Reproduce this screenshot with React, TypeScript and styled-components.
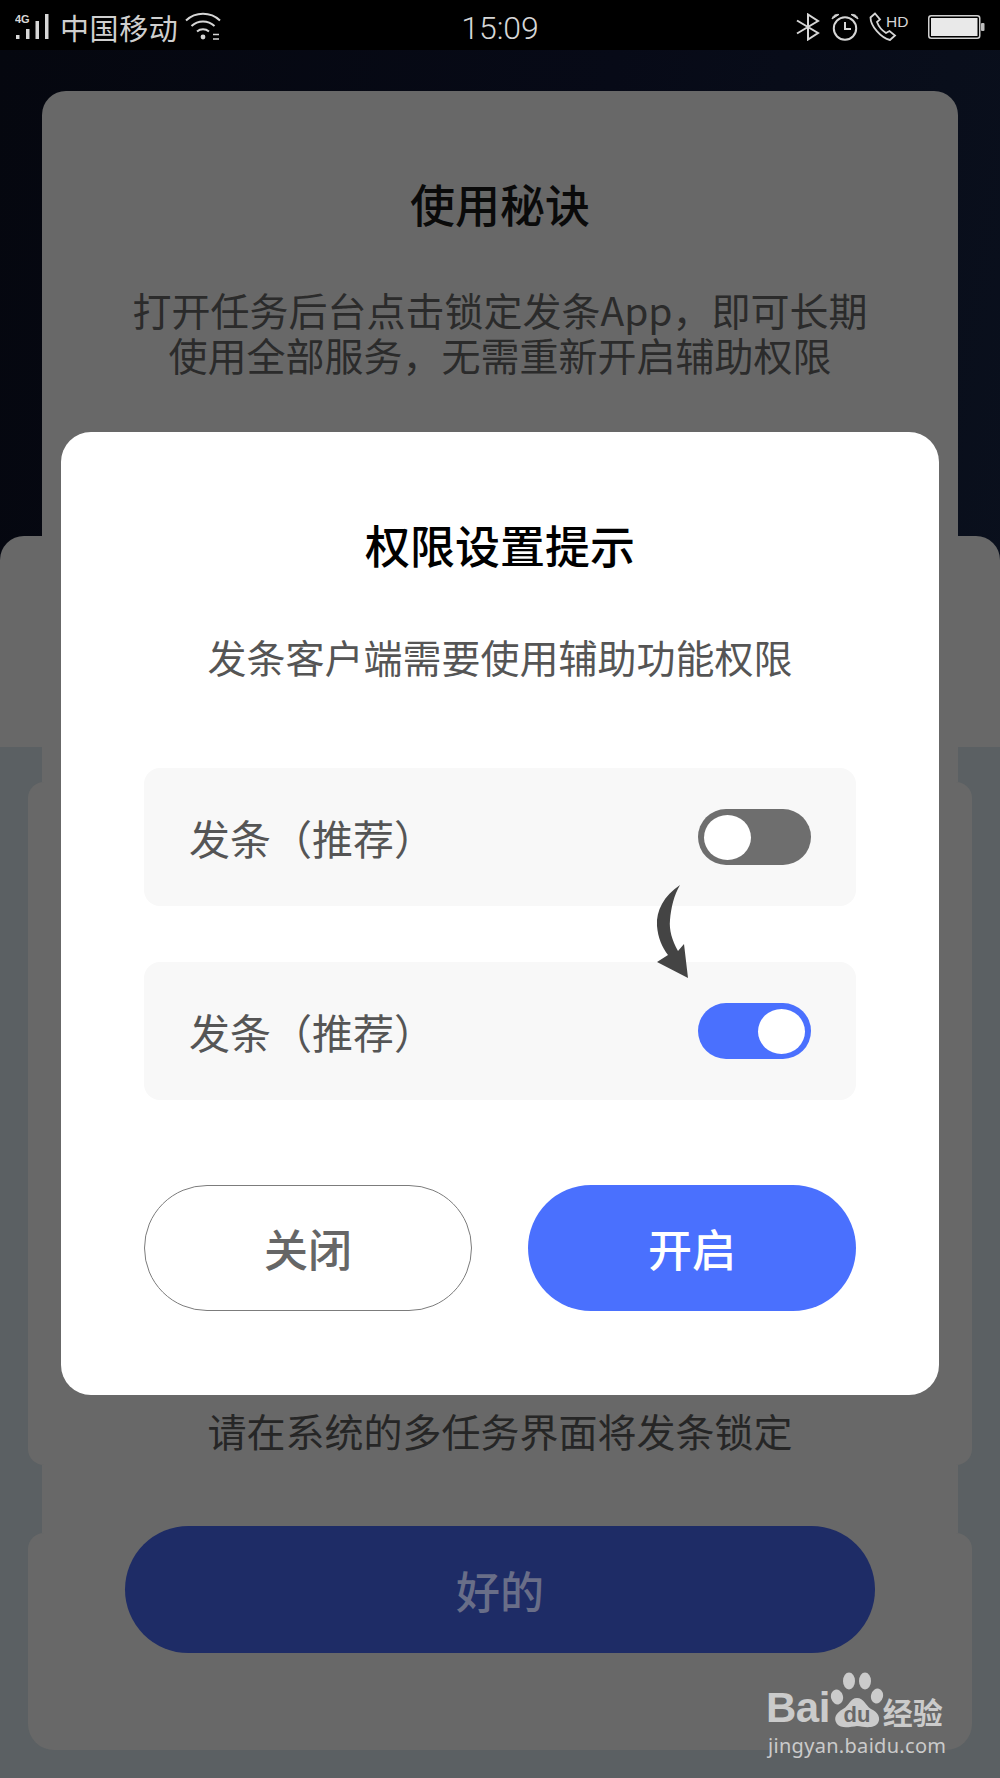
import React from "react";
import styled, { createGlobalStyle } from "styled-components";

const GlobalStyle = createGlobalStyle`
  html, body {
    margin: 0;
    padding: 0;
    background: #5b6063;
  }
  * {
    box-sizing: border-box;
  }
`;

const CJK = `"Noto Sans CJK SC", "Noto Sans", sans-serif`;
const PANEL_GREY = "#686868";

const Page = styled.div`
  position: relative;
  width: 1000px;
  height: 1778px;
  overflow: hidden;
  font-family: ${CJK};
  background: #5b6063;
`;

/* ---------- status bar ---------- */

const StatusBar = styled.div`
  position: relative;
  display: grid;
  grid-template-columns: 1fr auto 1fr;
  align-items: center;
  height: 50px;
  padding: 0 15px;
  background: #000000;
  color: #d2d2d2;
`;

const StatusLeft = styled.div`
  display: flex;
  align-items: center;
  height: 50px;
`;

const StatusRight = styled.div`
  display: flex;
  align-items: center;
  justify-content: flex-end;
  height: 50px;
`;

const Carrier = styled.span`
  margin-left: 9px;
  font-size: 29px;
  line-height: 50px;
  letter-spacing: 0.6px;
  color: #cfcfcf;
`;

const Clock = styled.span`
  padding-top: 3px;
  font-family: "Roboto", "Liberation Sans", sans-serif;
  font-weight: 300;
  font-size: 32px;
  line-height: 50px;
  color: #d6d6d6;
`;

const SignalIcon = () => (
  <svg width="36" height="40" viewBox="0 0 36 40" style={{ display: "block" }}>
    <text x="0" y="16" fontFamily="Liberation Sans" fontSize="11" fontWeight="700" fill="#d8d8d8">
      4G
    </text>
    <rect x="1" y="28" width="3.5" height="4" fill="#d8d8d8" />
    <rect x="11" y="22" width="3.5" height="10" fill="#d8d8d8" />
    <rect x="20.5" y="14" width="3.5" height="18" fill="#d8d8d8" />
    <rect x="30" y="7" width="3.5" height="25" fill="#d8d8d8" />
  </svg>
);

const WifiIcon = () => (
  <svg width="36" height="30" viewBox="0 0 36 30" fill="none" stroke="#d6d6d6" strokeWidth="2" style={{ marginLeft: 7, display: "block" }}>
    <path d="M1 8.5 C10.5 -0.5 25.5 -0.5 35 8.5" />
    <path d="M6.5 14 C13 8 23 8 29.5 14" />
    <path d="M12 19.5 C15.5 16.5 20.5 16.5 24 19.5" />
    <circle cx="18" cy="25" r="2.4" fill="#d6d6d6" stroke="none" />
    <path d="M28 22.5h6M28 27h6" strokeWidth="1.6" />
  </svg>
);

const BluetoothIcon = () => (
  <svg width="24" height="28" viewBox="0 0 24 28" fill="none" stroke="#d6d6d6" strokeWidth="2" style={{ display: "block" }}>
    <path d="M1 7.5 L22 20 L12 26.5 V1.5 L22 8 L1 20.5" />
  </svg>
);

const AlarmIcon = () => (
  <svg width="28" height="28" viewBox="0 0 28 28" fill="none" stroke="#d6d6d6" strokeWidth="2" style={{ marginLeft: 11, display: "block" }}>
    <circle cx="14" cy="15.5" r="11.2" />
    <path d="M14 9v7h6" />
    <path d="M1 6 C2 2 5 1 8 1.5 Z M27 6 C26 2 23 1 20 1.5 Z" fill="#d6d6d6" strokeWidth="1" />
  </svg>
);

const CallHdIcon = () => (
  <svg width="40" height="30" viewBox="0 0 40 30" fill="none" stroke="#d6d6d6" strokeWidth="1.8" style={{ marginLeft: 10, display: "block" }}>
    <path d="M6 1.5 L1.5 5.5 C1.5 14 12 26 21 28 L26 23.5 L20.5 19 L17 21 C13 18.5 9.5 14 8 10 L11 7.5 Z" />
    <text x="17" y="15" fontFamily="Liberation Sans" fontSize="15.5" fill="#d6d6d6" stroke="none">
      HD
    </text>
  </svg>
);

const BatteryIcon = () => (
  <svg width="57" height="26" viewBox="0 0 57 26" style={{ marginLeft: 19, marginTop: 2, display: "block" }}>
    <rect x="0.75" y="0.75" width="51" height="22.5" rx="2.5" fill="none" stroke="#d0d0d0" strokeWidth="1.5" />
    <rect x="3" y="3" width="46.5" height="18" fill="#e9e9e9" />
    <rect x="53" y="8" width="3.5" height="8" rx="1" fill="#bdbdbd" />
  </svg>
);

/* ---------- dimmed page behind the dialog ---------- */

const UpperArea = styled.div`
  display: flex;
  flex-direction: column;
  align-items: center;
  height: 697px;
  padding-top: 41px;
  background: linear-gradient(100deg, #05070f 0%, #070a17 55%, #0a101d 100%);
`;

const GuideCard = styled.section`
  flex: none;
  width: 916px;
  height: 445px;
  padding-top: 83px;
  background: ${PANEL_GREY};
  border-radius: 24px 24px 0 0;
  text-align: center;
`;

const BackTitle = styled.h2`
  margin: 0;
  font-size: 45px;
  line-height: 60px;
  font-weight: 500;
  color: #0a0a0a;
`;

const BackText = styled.p`
  margin: 53px 0 0;
  font-size: 39px;
  line-height: 45px;
  font-weight: 400;
  color: #2b2b2b;
`;

const SheetTop = styled.div`
  flex: none;
  width: 1000px;
  height: 211px;
  background: ${PANEL_GREY};
  border-radius: 24px 24px 0 0;
`;

const LowerArea = styled.div`
  display: flex;
  flex-direction: column;
  align-items: center;
  height: 1031px;
  background: #5b6063;
`;

const Neck = styled.div<{ $height: number }>`
  flex: none;
  width: 916px;
  height: ${(p) => p.$height}px;
  background: ${PANEL_GREY};
`;

const TipPanel = styled.section`
  flex: none;
  display: flex;
  align-items: flex-end;
  justify-content: center;
  width: 944px;
  height: 683px;
  padding-bottom: 10px;
  background: ${PANEL_GREY};
  border-radius: 16px;
`;

const TipText = styled.p`
  margin: 0;
  font-size: 39px;
  line-height: 50px;
  color: #262626;
`;

const ActionPanel = styled.section`
  flex: none;
  display: flex;
  justify-content: center;
  width: 944px;
  height: 217px;
  background: ${PANEL_GREY};
  border-radius: 16px 16px 26px 26px;
`;

const OkButton = styled.button`
  width: 750px;
  height: 127px;
  margin-top: -7px;
  border: none;
  border-radius: 64px;
  background: #1e2c66;
  color: #696e88;
  font-family: ${CJK};
  font-size: 44px;
  font-weight: 500;
`;

/* ---------- dialog ---------- */

const Dialog = styled.div`
  position: absolute;
  left: 61px;
  top: 432px;
  width: 878px;
  height: 963px;
  padding: 83px 83px 84px;
  background: #ffffff;
  border-radius: 30px;
  text-align: center;
`;

const DialogTitle = styled.h1`
  margin: 0;
  font-size: 45px;
  line-height: 60px;
  font-weight: 500;
  color: #000000;
`;

const DialogText = styled.p`
  margin: 56px 0 87px;
  font-size: 39px;
  line-height: 50px;
  color: #555555;
`;

const Rows = styled.div`
  display: flex;
  flex-direction: column;
  gap: 56px;
`;

const Row = styled.div`
  display: flex;
  align-items: center;
  justify-content: space-between;
  height: 138px;
  padding: 0 45px;
  background: #f8f8f8;
  border-radius: 16px;
`;

const RowLabel = styled.span`
  font-size: 41px;
  line-height: 60px;
  color: #555555;
`;

const Track = styled.div<{ $on: boolean }>`
  display: flex;
  justify-content: ${(p) => (p.$on ? "flex-end" : "flex-start")};
  align-items: center;
  width: 113px;
  height: 56px;
  padding: 0 6px;
  border-radius: 28px;
  background: ${(p) => (p.$on ? "#4a70fe" : "#6e6e6e")};
`;

const Knob = styled.span`
  width: 47px;
  height: 45px;
  border-radius: 50%;
  background: #ffffff;
`;

const Toggle = ({ on }: { on: boolean }) => (
  <Track $on={on}>
    <Knob />
  </Track>
);

const ArrowMark = styled.svg`
  position: absolute;
  left: 594px;
  top: 452px;
`;

const Buttons = styled.div`
  display: grid;
  grid-template-columns: 328px 328px;
  justify-content: space-between;
  margin-top: 85px;
`;

const DialogButton = styled.button<{ $primary?: boolean }>`
  height: 126px;
  border-radius: 63px;
  border: ${(p) => (p.$primary ? "none" : "1px solid #7c7c7c")};
  background: ${(p) => (p.$primary ? "#4a70fe" : "#ffffff")};
  color: ${(p) => (p.$primary ? "#ffffff" : "#666666")};
  font-family: ${CJK};
  font-size: 44px;
  font-weight: 500;
`;

/* ---------- watermark ---------- */

const Watermark = styled.div`
  position: absolute;
  left: 766px;
  top: 1670px;
  width: 184px;
  color: #cbcbcb;
`;

const WatermarkLogo = styled.div`
  display: flex;
  align-items: flex-end;
  height: 60px;
  white-space: nowrap;
`;

const LogoWord = styled.span`
  flex: none;
  font-family: "Liberation Sans", sans-serif;
  font-weight: 700;
  font-size: 42px;
  line-height: 44px;
  letter-spacing: -0.5px;
`;

const LogoCn = styled.span`
  flex: none;
  margin-left: -1px;
  font-size: 30px;
  line-height: 38px;
  font-weight: 700;
`;

const WatermarkUrl = styled.div`
  margin-top: 3px;
  padding-left: 2px;
  font-family: "Noto Sans", sans-serif;
  font-size: 20px;
  line-height: 26px;
  letter-spacing: 0.3px;
  white-space: nowrap;
`;

const PawSvg = styled.svg`
  flex: none;
  display: block;
  margin: 0 0 1px 0;
`;

const PawLogo = () => (
  <PawSvg width="54" height="58" viewBox="0 0 54 58">
    <g fill="#cbcbcb">
      <ellipse cx="7" cy="26" rx="6" ry="7.5" transform="rotate(-15 7 26)" />
      <ellipse cx="19" cy="10" rx="6" ry="8.5" />
      <ellipse cx="35" cy="10" rx="6" ry="8.5" />
      <ellipse cx="47" cy="25" rx="6" ry="7.5" transform="rotate(15 47 25)" />
      <path d="M27 27 C20 27 20 34 13 38 C6 42 3 47 7 53 C11 58 20 56 27 55 C34 56 44 58 48 52 C51 47 48 41 41 38 C35 34 34 27 27 27 Z" />
    </g>
    <text x="27" y="51" textAnchor="middle" fontFamily="Liberation Sans" fontSize="22" fontWeight="700" fill="#686868">
      du
    </text>
  </PawSvg>
);

export default function App() {
  return (
    <Page>
      <GlobalStyle />
      <StatusBar>
        <StatusLeft>
          <SignalIcon />
          <Carrier>中国移动</Carrier>
          <WifiIcon />
        </StatusLeft>
        <Clock>15:09</Clock>
        <StatusRight>
          <BluetoothIcon />
          <AlarmIcon />
          <CallHdIcon />
          <BatteryIcon />
        </StatusRight>
      </StatusBar>

      <UpperArea>
        <GuideCard>
          <BackTitle>使用秘诀</BackTitle>
          <BackText>
            打开任务后台点击锁定发条App，即可长期
            <br />
            使用全部服务，无需重新开启辅助权限
          </BackText>
        </GuideCard>
        <SheetTop />
      </UpperArea>

      <LowerArea>
        <Neck $height={35} />
        <TipPanel>
          <TipText>请在系统的多任务界面将发条锁定</TipText>
        </TipPanel>
        <Neck $height={68} />
        <ActionPanel>
          <OkButton>好的</OkButton>
        </ActionPanel>
      </LowerArea>

      <Dialog>
        <DialogTitle>权限设置提示</DialogTitle>
        <DialogText>发条客户端需要使用辅助功能权限</DialogText>
        <Rows>
          <Row>
            <RowLabel>发条（推荐）</RowLabel>
            <Toggle on={false} />
          </Row>
          <Row>
            <RowLabel>发条（推荐）</RowLabel>
            <Toggle on />
          </Row>
        </Rows>
        <ArrowMark width="36" height="98" viewBox="0 0 36 98">
          <path
            d="M25 1 C9 12 1 26 2 42 C3 54 7 63 13 71 L2 78 L33 94 L29 60 L23 67 C17 56 14 46 15 36 C16 24 19 11 25 1 Z"
            fill="#444444"
          />
        </ArrowMark>
        <Buttons>
          <DialogButton>关闭</DialogButton>
          <DialogButton $primary>开启</DialogButton>
        </Buttons>
      </Dialog>

      <Watermark>
        <WatermarkLogo>
          <LogoWord>Bai</LogoWord>
          <PawLogo />
          <LogoCn>经验</LogoCn>
        </WatermarkLogo>
        <WatermarkUrl>jingyan.baidu.com</WatermarkUrl>
      </Watermark>
    </Page>
  );
}
